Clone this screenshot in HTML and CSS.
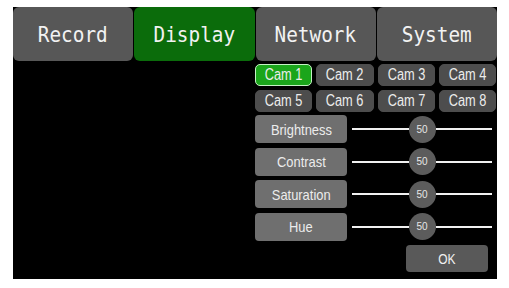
FILE: index.html
```html
<!DOCTYPE html>
<html lang="en">
<head>
  <meta charset="UTF-8">
  <title>Display Settings</title>
  <link rel="stylesheet" href="styles.css">
</head>
<body>

<div class="screen">
  <div class="tabs">
    <div class="tab"><span>Record</span></div>
    <div class="tab active"><span>Display</span></div>
    <div class="tab"><span>Network</span></div>
    <div class="tab"><span>System</span></div>
  </div>

  <div class="content">
    <div class="preview"></div>

    <div class="panel">
      <div class="cams">
        <button class="cam selected"><span>Cam 1</span></button>
        <button class="cam"><span>Cam 2</span></button>
        <button class="cam"><span>Cam 3</span></button>
        <button class="cam"><span>Cam 4</span></button>
        <button class="cam"><span>Cam 5</span></button>
        <button class="cam"><span>Cam 6</span></button>
        <button class="cam"><span>Cam 7</span></button>
        <button class="cam"><span>Cam 8</span></button>
      </div>

      <div class="settings">
        <div class="setting">
          <div class="label"><span>Brightness</span></div>
          <div class="slider"><span class="line"></span><span class="knob">50</span><span class="line"></span></div>
        </div>
        <div class="setting">
          <div class="label"><span>Contrast</span></div>
          <div class="slider"><span class="line"></span><span class="knob">50</span><span class="line"></span></div>
        </div>
        <div class="setting">
          <div class="label"><span>Saturation</span></div>
          <div class="slider"><span class="line"></span><span class="knob">50</span><span class="line"></span></div>
        </div>
        <div class="setting">
          <div class="label"><span>Hue</span></div>
          <div class="slider"><span class="line"></span><span class="knob">50</span><span class="line"></span></div>
        </div>
      </div>

      <div class="actions">
        <button class="ok"><span>OK</span></button>
      </div>
    </div>
  </div>
</div>

</body>
</html>
```

FILE: styles.css
```css
body {
  margin: 0;
  background: #fff;
  font-family: "Liberation Sans", Arial, sans-serif;
}

.screen {
  margin: 7px 0 0 13px;
  width: 484px;
  height: 272px;
  background: #000;
  display: flex;
  flex-direction: column;
}

/* narrow, tall lettering like the device font */
.tab span,
.cam span,
.label span,
.ok span {
  display: inline-block;
}

/* Top tab bar */
.tabs {
  display: flex;
  gap: 1px;
  height: 54px;
}

.tab {
  flex: 1;
  background: #575757;
  border-radius: 6px;
  color: #f2f2f2;
  font-family: "DejaVu Sans Mono", monospace;
  font-size: 22px;
  display: flex;
  align-items: center;
  justify-content: center;
}

.tab span {
  transform: scaleX(0.88);
  font-weight: 300;
}

.tab.active {
  background: #0b6c0b;
}

.content {
  flex: 1;
  display: flex;
}

.preview {
  width: 242px;
}

.panel {
  width: 241px;
  padding-top: 3px;
  display: flex;
  flex-direction: column;
}

/* Camera selector */
.cams {
  display: grid;
  grid-template-columns: repeat(4, 1fr);
  gap: 4px;
}

.cam {
  height: 22px;
  border: 1px solid #4d4d4d;
  border-radius: 5px;
  background: #4d4d4d;
  color: #ececec;
  font-family: "Liberation Sans", Arial, sans-serif;
  font-size: 16px;
  padding: 0;
  line-height: 18px;
}

.cam span {
  transform: scaleX(0.8);
}

.cam.selected {
  background: #1ba51b;
  border-color: #c4f2c4;
}

/* Picture settings */
.settings {
  margin-top: 3px;
  display: flex;
  flex-direction: column;
  gap: 4.5px;
}

.setting {
  display: flex;
  align-items: center;
  height: 28px;
}

.label {
  width: 92px;
  height: 100%;
  background: #6f6f6f;
  border-radius: 4px;
  color: #ececec;
  font-size: 15px;
  display: flex;
  align-items: center;
  justify-content: center;
}

.label span {
  transform: scaleX(0.86);
}

.slider {
  margin-left: 5px;
  width: 140px;
  display: flex;
  align-items: center;
}

.line {
  flex: 1;
  height: 2px;
  background: #f0f0f0;
}

.knob {
  width: 27px;
  height: 27px;
  border-radius: 50%;
  background: #5c5c5c;
  color: #e6e6e6;
  font-size: 10px;
  display: flex;
  align-items: center;
  justify-content: center;
}

.actions {
  margin-top: 4px;
  display: flex;
  justify-content: flex-end;
  padding-right: 8px;
}

.ok {
  width: 82px;
  height: 27px;
  border: none;
  border-radius: 4px;
  background: #595959;
  color: #f0f0f0;
  font-family: "Liberation Sans", Arial, sans-serif;
  font-size: 15px;
  padding: 0;
}

.ok span {
  transform: scaleX(0.8);
}
```
